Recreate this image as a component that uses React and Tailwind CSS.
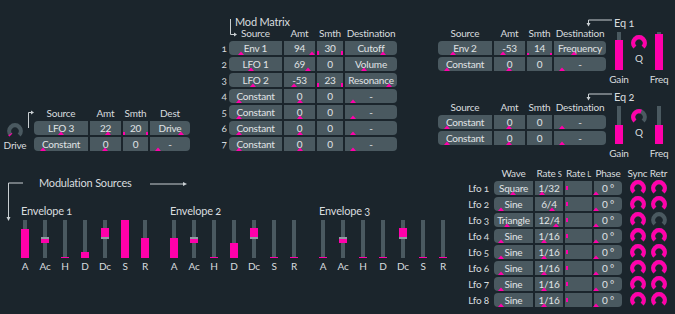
import React from 'react';
import clsx from 'clsx';

const PINK = '#ff00aa';
const TRACK = '#4a5960';
const LINE = '#c9cfd2';

// small value marker at the bottom of a cell
const Tri = ({ x }) => (
  <svg className="absolute bottom-0" style={{ left: x - 3 }} width="6" height="4" viewBox="0 0 6 4">
    <path d="M0 4 L3 0.6 L6 4 Z" fill={PINK} />
  </svg>
);

const Cell = ({ w, c, first, last }) => (
  <div
    className={clsx(
      'relative h-[14px] flex items-center justify-center bg-[#4a5960] text-[#e0e4e6] whitespace-nowrap',
      w,
      first && 'rounded-l-[4px]',
      last && 'rounded-r-[4px]'
    )}
  >
    <span>{c.t}</span>
    {c.tri !== undefined && <Tri x={c.tri} />}
    {c.sm > 0 && (
      <>
        <div className="absolute left-0 bottom-0 w-[2px] bg-[#ff00aa]" style={{ height: c.sm }} />
        <div className="absolute right-0 bottom-0 w-[2px] bg-[#ff00aa]" style={{ height: c.sm }} />
      </>
    )}
    {c.bar && <div className="absolute left-[1px] top-[5px] w-[2px] h-[4px] bg-[#ff00aa]" />}
  </div>
);

const Row = ({ widths, cells }) => (
  <div className="flex gap-[2px]">
    {cells.map((c, i) => (
      <Cell key={i} w={widths[i]} c={c} first={i === 0} last={i === cells.length - 1} />
    ))}
  </div>
);

const Header = ({ widths, labels }) => (
  <div className="flex gap-[2px] h-[10px] items-center">
    {labels.map((l, i) => (
      <div key={i} className={clsx('text-center whitespace-nowrap', widths[i])}>
        {l}
      </div>
    ))}
  </div>
);

const Knob = ({ value = 1, track = TRACK }) => {
  const r = 5.8;
  const c = 8;
  const pt = (a) => {
    const rad = (a * Math.PI) / 180;
    return [c + r * Math.sin(rad), c - r * Math.cos(rad)];
  };
  const arc = (a0, a1) => {
    const [x0, y0] = pt(a0);
    const [x1, y1] = pt(a1);
    const large = a1 - a0 > 180 ? 1 : 0;
    return `M${x0} ${y0} A${r} ${r} 0 ${large} 1 ${x1} ${y1}`;
  };
  const end = -135 + 270 * value;
  return (
    <svg width="16" height="16" viewBox="0 0 16 16" className="flex-none">
      <path d={arc(-135, 135)} stroke={track} strokeWidth="4.2" fill="none" />
      {value > 0 && <path d={arc(-135, end)} stroke={PINK} strokeWidth="4.2" fill="none" />}
    </svg>
  );
};

// vertical fader, 38px tall. v = filled px from bottom, b = offset from centre (bipolar)
const Fader = ({ v = 0, b }) => (
  <div className="relative w-[8px] h-[38px]">
    <div className="absolute left-[2px] w-[4px] top-0 bottom-0 bg-[#4a5960]" />
    {b === undefined ? (
      <div className="absolute left-0 right-0 bottom-0 bg-[#ff00aa]" style={{ height: Math.max(v, 1) }} />
    ) : (
      <>
        <div
          className="absolute left-0 right-0 bg-[#ff00aa]"
          style={b < 0 ? { top: 17 + b, height: -b } : { top: 19, height: b }}
        />
        <div className="absolute left-0 right-0 top-[17px] h-[2px] bg-[#8f9ca2]" />
      </>
    )}
  </div>
);

const driveW = ['w-[54px]', 'w-[31px]', 'w-[25px]', 'w-[40px]'];
const matrixW = ['w-[53px]', 'w-[31px]', 'w-[26px]', 'w-[52px]'];
const eqW = ['w-[54px]', 'w-[31px]', 'w-[25px]', 'w-[52px]'];
const lfoW = ['w-[39px]', 'w-[28px]', 'w-[27px]', 'w-[28px]'];

const constRow = (src, amt, dst) => [
  { t: 'Constant', tri: src },
  { t: '0', tri: amt },
  { t: '0' },
  { t: '-', tri: dst },
];

const matrixRows = [
  [{ t: 'Env 1', tri: 12 }, { t: '94', tri: 28 }, { t: '30', sm: 4 }, { t: 'Cutoff', tri: 38 }],
  [{ t: 'LFO 1', tri: 22 }, { t: '69', tri: 24 }, { t: '0' }, { t: 'Volume', tri: 19 }],
  [{ t: 'LFO 2', tri: 24 }, { t: '-53', tri: 10 }, { t: '23', sm: 4 }, { t: 'Resonance', tri: 44 }],
  constRow(10, 16, 8),
  constRow(10, 16, 8),
  constRow(10, 16, 8),
  constRow(10, 16, 8),
];

const eqBlocks = [
  {
    name: 'Eq 1',
    rows: [
      [{ t: 'Env 2', tri: 15 }, { t: '-53', tri: 9 }, { t: '14', sm: 2 }, { t: 'Frequency', tri: 20 }],
      constRow(9, 15, 8),
    ],
    gain: 30,
    freq: 36,
    q: 1,
  },
  {
    name: 'Eq 2',
    rows: [constRow(9, 15, 8), constRow(9, 15, 8)],
    gain: 19,
    freq: 19,
    q: 0.58,
  },
];

const lfos = [
  ['Square', 19, '1/32', 7, true],
  ['Sine', 7, '6/4', 17, true],
  ['Triangle', 13, '12/4', 21, false],
  ['Sine', 7, '1/16', 9, true],
  ['Sine', 7, '1/16', 9, true],
  ['Sine', 7, '1/16', 9, true],
  ['Sine', 7, '1/16', 9, true],
  ['Sine', 7, '1/16', 9, true],
];

const envelopes = [
  { name: 'Envelope 1', f: [{ v: 29 }, { b: 4 }, { v: 0 }, { v: 6 }, { b: -9 }, { v: 38 }, { v: 20 }] },
  { name: 'Envelope 2', f: [{ v: 20 }, { b: 4 }, { v: 0 }, { v: 15 }, { b: -9 }, { v: 0 }, { v: 0 }] },
  { name: 'Envelope 3', f: [{ v: 0 }, { b: 4 }, { v: 0 }, { v: 0 }, { b: -9 }, { v: 0 }, { v: 0 }] },
];
const envLabels = ['A', 'Ac', 'H', 'D', 'Dc', 'S', 'R'];

const DriveSection = () => (
  <div className="w-[190px] flex-none flex items-start pt-[108px] pl-[4px]">
    <div className="w-[22px] flex flex-col items-center pt-[15px]">
      <Knob value={0.05} />
      <div className="h-[10px] mt-[1px] flex items-center">Drive</div>
    </div>
    <svg width="8" height="22" viewBox="0 0 8 22" className="mt-[2px] flex-none">
      <path d="M2.5 18 V2.5 H6" stroke={LINE} strokeWidth="1" fill="none" />
      <path d="M5 0.5 L8 2.5 L5 4.5 Z" fill={LINE} />
    </svg>
    <div className="flex flex-col">
      <Header widths={driveW} labels={['Source', 'Amt', 'Smth', 'Dest']} />
      <div className="mt-[3px] flex flex-col gap-[2px]">
        <Row widths={driveW} cells={[{ t: 'LFO 3', tri: 27 }, { t: '22', tri: 18 }, { t: '20', sm: 3 }, { t: 'Drive', tri: 31 }]} />
        <Row widths={driveW} cells={constRow(9, 15, 8)} />
      </div>
    </div>
  </div>
);

const MatrixSection = () => (
  <div className="relative ml-[29px] flex-none flex flex-col pt-[16px]">
    <svg width="10" height="21" viewBox="0 0 10 21" className="absolute left-[9px] top-[17px]">
      <path d="M2.5 2 V17.5 H6.5" stroke={LINE} strokeWidth="1" fill="none" />
      <path d="M6 15.5 L9 17.5 L6 19.5 Z" fill={LINE} />
    </svg>
    <div className="h-[11px] pl-[16px] text-[11px] flex items-center">Mod Matrix</div>
    <div className="pl-[10px] mt-[1px]">
      <Header widths={matrixW} labels={['Source', 'Amt', 'Smth', 'Destination']} />
    </div>
    <div className="mt-[3px] flex flex-col gap-[2px]">
      {matrixRows.map((r, i) => (
        <div key={i} className="flex items-center">
          <div className="w-[10px] text-center oldstyle-nums">{i + 1}</div>
          <Row widths={matrixW} cells={r} />
        </div>
      ))}
    </div>
  </div>
);

const EqBlock = ({ b }) => (
  <div className="flex flex-col">
    <div className="h-[11px] flex items-start pl-[148px]">
      <svg width="26" height="11" viewBox="0 0 26 11" className="flex-none">
        <path d="M26 3 H2.5 V7" stroke={LINE} strokeWidth="1" fill="none" />
        <path d="M0.5 6 L2.5 9.5 L4.5 6 Z" fill={LINE} />
      </svg>
      <div className="ml-[2px] text-[11px] h-[11px] flex items-center oldstyle-nums">{b.name}</div>
    </div>
    <div className="flex items-start">
      <div className="flex flex-col">
        <Header widths={eqW} labels={['Source', 'Amt', 'Smth', 'Destination']} />
        <div className="mt-[3px] flex flex-col gap-[2px]">
          {b.rows.map((r, i) => (
            <Row key={i} widths={eqW} cells={r} />
          ))}
        </div>
      </div>
      <div className="ml-[3px] flex">
        <div className="w-[20px] flex flex-col items-center pt-[4px]">
          <Fader v={b.gain} />
          <div className="mt-[4px] h-[10px] flex items-center">Gain</div>
        </div>
        <div className="w-[20px] flex flex-col items-center pt-[7px]">
          <Knob value={b.q} />
          <div className="mt-[2px] h-[10px] flex items-center">Q</div>
        </div>
        <div className="w-[20px] flex flex-col items-center pt-[4px]">
          <Fader v={b.freq} />
          <div className="mt-[4px] h-[10px] flex items-center">Freq</div>
        </div>
      </div>
    </div>
  </div>
);

const EqSection = () => (
  <div className="ml-[41px] flex-none flex flex-col pt-[17px] gap-[7px]">
    {eqBlocks.map((b) => (
      <EqBlock key={b.name} b={b} />
    ))}
  </div>
);

const ModSources = () => (
  <div className="w-[459px] flex-none flex flex-col pt-[16px]">
    <div className="h-[12px] flex items-center">
      <svg width="24" height="12" viewBox="0 0 24 12" className="flex-none overflow-visible">
        <path d="M23 7 H8.5 V42" stroke={LINE} strokeWidth="1" fill="none" />
        <path d="M6.5 41 L8.5 45 L10.5 41 Z" fill={LINE} />
      </svg>
      <div className="ml-[15px] text-[11px]">Modulation Sources</div>
      <svg width="38" height="12" viewBox="0 0 38 12" className="ml-[18px] flex-none">
        <path d="M0 8 H34" stroke={LINE} strokeWidth="1" fill="none" />
        <path d="M33 6 L37 8 L33 10 Z" fill={LINE} />
      </svg>
    </div>
    <div className="mt-[17px] flex pl-[15px] gap-[9px]">
      {envelopes.map((e) => (
        <div key={e.name} className="flex flex-col">
          <div className="h-[11px] pl-[6px] text-[11px] flex items-center oldstyle-nums">{e.name}</div>
          <div className="mt-[4px] flex">
            {e.f.map((f, i) => (
              <div key={i} className="w-[20px] flex flex-col items-center">
                <Fader v={f.v} b={f.b} />
                <div className="mt-[3px] h-[10px] flex items-center">{envLabels[i]}</div>
              </div>
            ))}
          </div>
        </div>
      ))}
    </div>
  </div>
);

const LfoSection = () => (
  <div className="flex-none flex flex-col pt-[8px]">
    <div className="flex h-[10px] items-center">
      <div className="w-[35px]" />
      <Header
        widths={lfoW}
        labels={[
          'Wave',
          <span key="s">
            Rate<span className="text-[7.5px] ml-[2px]">S</span>
          </span>,
          <span key="l">
            Rate<span className="text-[7.5px] ml-[2px]">L</span>
          </span>,
          'Phase',
        ]}
      />
      <div className="ml-[5px] w-[21px] text-center">Sync</div>
      <div className="w-[21px] text-center">Retr</div>
    </div>
    <div className="mt-[3px] flex flex-col gap-[2px]">
      {lfos.map((l, i) => (
        <div key={i} className="flex items-center h-[14px]">
          <div className="w-[30px] text-right whitespace-nowrap oldstyle-nums">Lfo {i + 1}</div>
          <div className="ml-[5px]">
            <Row
              widths={lfoW}
              cells={[{ t: l[0], tri: l[1] }, { t: l[2], tri: l[3] }, { t: '', bar: true }, { t: '0 °', tri: 2 }]}
            />
          </div>
          <div className="ml-[5px] w-[21px] flex justify-center">
            <Knob value={1} />
          </div>
          <div className="w-[21px] flex justify-center">
            <Knob value={l[4] ? 1 : 0} />
          </div>
        </div>
      ))}
    </div>
  </div>
);

export default function App() {
  return (
    <div className="w-[675px] h-[314px] overflow-hidden bg-[#1b252c] text-[#d8dcdf] font-['Lato',sans-serif] text-[10px] tracking-[-0.2px] leading-none flex flex-col">
      <div className="h-[160px] flex-none flex">
        <DriveSection />
        <MatrixSection />
        <EqSection />
      </div>
      <div className="h-[154px] flex-none flex">
        <ModSources />
        <LfoSection />
      </div>
    </div>
  );
}
